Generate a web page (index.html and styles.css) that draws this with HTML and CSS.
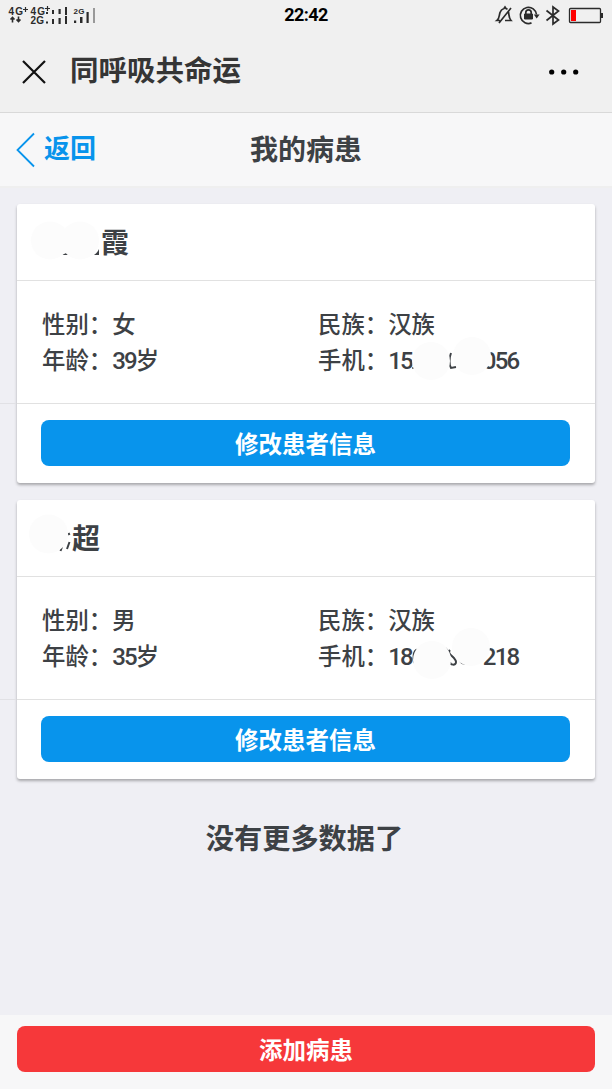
FILE: index.html
```html
<!DOCTYPE html>
<html lang="zh-CN">
<head>
<meta charset="utf-8">
<meta name="viewport" content="width=device-width">
<title>我的病患</title>
<link rel="stylesheet" href="styles.css">
</head>
<body>
<div class="app">
  <div class="status">
    <svg class="signal" width="100" height="32" viewBox="0 0 100 32">
      <g fill="#2b2b2b" font-family="Liberation Sans, sans-serif" font-weight="700" font-size="10">
        <text x="8.500" y="15" textLength="14.500">4G</text>
        <text x="30.500" y="14.500" textLength="14.500">4G</text>
        <text x="30.500" y="24" textLength="13.500">2G</text>
        <text x="73.500" y="13.500" font-size="8" textLength="11">2G</text>
      </g>
      <g fill="none" stroke="#2b2b2b" stroke-width="1.200">
        <path d="M23 9.500h5M25.500 7v5M45 8.500h5M47.500 6v5"/>
        <path stroke-width="1.600" d="M12.500 22.500v-5M10.500 19.500l2-2 2 2M18.500 16.500v5M16.500 19.500l2 2 2-2"/>
      </g>
      <path fill="#2b2b2b" d="M46 12h2v2h-2zM52 10h2v4h-2zM58.500 9h2.200v5h-2.200zM65 7h2v8h-2zM46 21.500h2v2h-2zM52 19h2v5h-2zM58.500 18h2.200v6h-2.200zM65 16h2v8h-2zM74 20.500h2.200v2.500h-2.200zM80 17h2.500v6h-2.500zM86.500 12h2.200v11h-2.200z"/>
      <path fill="#999" d="M93 8h2v15h-2z"/>
    </svg>
    <span class="clock">22:42</span>
    <svg class="system" width="120" height="32" viewBox="492 0 120 32" fill="none" stroke="#2b2b2b" stroke-width="1.700">
      <path d="M500 20.500h-3c2.500-2 2-5 3-8 .8-2.500 2.300-3.500 4-4l1-1.500 1 1.500 1.500.7M508.500 12c.7 4 .3 6 2.500 8.500h-6M511 8l-12 15"/>
      <path d="M531.500 22.900a8.100 8.100 0 1 1 5-8.400"/>
      <path d="M533.800 14.500h5.800l-2.900 4z" fill="#2b2b2b" stroke="none"/>
      <path d="M525.800 14v-1.500a2.700 2.700 0 0 1 5.400 0V14" />
      <path d="M524.500 14h8v5h-8z" fill="#2b2b2b" stroke-width="1"/>
      <path d="M546.500 10.500l12 9.500-5.500 4V7l5.500 4-12 9.500"/>
      <rect x="569.500" y="8.500" width="31" height="14" rx="1" stroke-width="1.300"/>
      <path d="M601 13h2v5h-2z" fill="#2b2b2b" stroke="none"/>
      <path d="M571 10h5v11h-5z" fill="#f00" stroke="none"/>
    </svg>
  </div>

  <header class="titlebar">
    <svg class="close" width="24" height="24" viewBox="0 0 24 24"><path d="M1 1l22 22M23 1L1 23" stroke="#111" stroke-width="2.200" fill="none"/></svg>
    <h1>同呼吸共命运</h1>
    <svg class="more" width="30" height="6" viewBox="0 0 30 6"><circle cx="2.700" cy="3" r="2.600"/><circle cx="14.700" cy="3" r="2.600"/><circle cx="26.700" cy="3" r="2.600"/></svg>
  </header>

  <nav class="navbar">
    <a class="back">
      <svg width="20" height="36" viewBox="0 0 20 36"><path d="M18 1.500L1.500 18 18 34.500" fill="none" stroke="#0894ec" stroke-width="1.800"/></svg>
      <span>返回</span>
    </a>
    <h2>我的病患</h2>
    <span></span>
  </nav>

  <main class="content">
    <section class="card">
      <svg class="masks" width="578" height="279" viewBox="17 204 578 279">
        <path d="M62 255c3-1 5-3 6-3v3zM94 255c3-2 4-4 5-6v6z" fill="#3d4145"/>
        <path d="M451 353c-2 5-2 12 0 15l5-1" fill="none" stroke="#3d4145" stroke-width="2"/>
        <path d="M412 367h2v2h-2z" fill="#777"/>
        <g fill="#fcfcfc"><circle cx="50" cy="240.500" r="19"/><circle cx="80" cy="240.500" r="19"/><circle cx="431" cy="361" r="19"/><circle cx="472" cy="356" r="19"/></g>
      </svg>
      <div class="card-header name-one">霞</div>
      <div class="card-body">
        <div>性别：女</div><div>民族：汉族</div>
        <div>年龄：<span class="num">39</span>岁</div>
        <div>手机：<span class="num">15</span><span class="gap"></span><span class="num tail">056</span></div>
      </div>
      <div class="card-footer"><button class="button">修改患者信息</button></div>
    </section>

    <section class="card">
      <svg class="masks" width="578" height="279" viewBox="17 500 578 279">
        <path d="M68.500 533l1 2M69.500 542l-2.500 7M62 547l-1.500 4" fill="none" stroke="#3d4145" stroke-width="2"/>
        <path d="M418 650c-5-2-6 12-2 14M445 648l3 3M450 650c-4 4 6 7 6 12 0 4-6 3-6 0M460 661c2 3 4 3 6 2" fill="none" stroke="#3d4145" stroke-width="2"/>
        <g fill="#fcfcfc"><circle cx="48.500" cy="534" r="19.500"/><circle cx="432" cy="660" r="19"/><circle cx="471" cy="647" r="19"/></g>
      </svg>
      <div class="card-header name-two">超</div>
      <div class="card-body">
        <div>性别：男</div><div>民族：汉族</div>
        <div>年龄：<span class="num">35</span>岁</div>
        <div>手机：<span class="num">18</span><span class="gap"></span><span class="num tail">218</span></div>
      </div>
      <div class="card-footer"><button class="button">修改患者信息</button></div>
    </section>

    <p class="empty">没有更多数据了</p>
  </main>

  <footer class="toolbar"><button class="button danger">添加病患</button></footer>
</div>
</body>
</html>
```

FILE: styles.css
```css
* { box-sizing: border-box; }
body {
  margin: 0;
  font-family: "Noto Sans CJK SC", sans-serif;
  font-weight: 500;
  color: #3d4145;
  background: #efeff4;
}
h1, h2, p { margin: 0; font-weight: 700; }
svg { display: block; flex: none; }
.app { height: 1089px; display: flex; flex-direction: column; overflow: hidden; }

.status {
  height: 32px;
  flex: none;
  display: grid;
  grid-template-columns: 1fr auto 1fr;
  background: #f0f0f0;
}
.system { justify-self: end; }
.clock {
  font: 700 18px/30px Roboto, sans-serif;
  letter-spacing: -0.6px;
  color: #000;
}

.titlebar {
  height: 81px;
  flex: none;
  display: flex;
  align-items: center;
  padding: 0 33px 0 22px;
  background: #f0f0f0;
  border-bottom: 1px solid #d9d9d9;
}
.titlebar h1 {
  margin-left: 24px;
  font-size: 28.5px;
  line-height: 40px;
  padding-bottom: 6px;
  color: #353535;
}
.more { margin-left: auto; }

.navbar {
  height: 75px;
  flex: none;
  display: grid;
  grid-template-columns: 1fr auto 1fr;
  align-items: center;
  padding: 0 16px;
  background: #f7f7f8;
  border-bottom: 2px solid #efefef;
}
.navbar h2 { font-size: 28px; line-height: 40px; padding-bottom: 4px; }
.back { display: flex; align-items: center; gap: 8px; color: #0894ec; font-weight: 700; }
.back span { font-size: 26px; line-height: 40px; padding-bottom: 5px; }

.content {
  flex: 1;
  padding: 16px 17px 0;
}
.card {
  position: relative;
  height: 279px;
  margin-bottom: 17px;
  background: #fff;
  border-radius: 3px;
  box-shadow: 0 2px 3px rgba(0, 0, 0, .3);
}
/* hairline that runs from the page edge to the footer divider */
.card::before {
  content: "";
  position: absolute;
  left: -17px;
  top: 199px;
  width: 16px;
  height: 1px;
  background: #e1e1e5;
}
.masks { position: absolute; left: 0; top: 0; }
.card-header {
  height: 77px;
  font-size: 28px;
  line-height: 75px;
  font-weight: 700;
  border-bottom: 1px solid #e1e1e1;
}
.name-one { padding-left: 84px; }
.name-two { padding-left: 55px; }
.card-body {
  height: 122px;
  padding: 24px 25px;
  display: grid;
  grid-template-columns: 276px 1fr;
  grid-auto-rows: 36px;
  font-size: 23.4px;
  line-height: 36px;
  white-space: nowrap;
}
.num { font-family: Roboto, sans-serif; font-size: 24px; letter-spacing: -1.8px; }
.gap { display: inline-block; width: 71px; }
.card-footer {
  height: 80px;
  padding: 16px 25px 0 24px;
  border-top: 1px solid #e1e1e1;
}
.button {
  display: block;
  width: 100%;
  height: 46px;
  padding: 0;
  border: 0;
  border-radius: 8px;
  background: #0894ec;
  color: #fff;
  font: 700 23.5px/45px "Noto Sans CJK SC", sans-serif;
}
.empty {
  margin-top: 38px;
  padding-right: 3px;
  text-align: center;
  font-size: 28.2px;
  line-height: 40px;
}
.toolbar {
  height: 74px;
  flex: none;
  padding: 11px 17px 0;
  background: #f7f7f8;
}
.danger { background: #f6383a; }
```
